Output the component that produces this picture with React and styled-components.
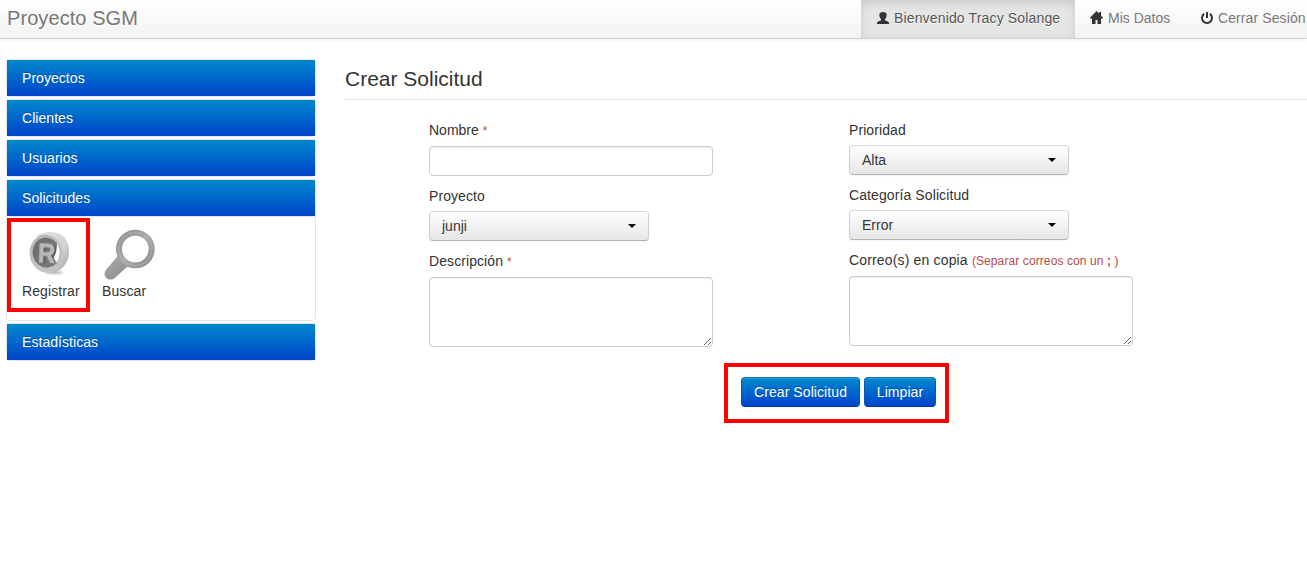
import React from "react";
import styled, { createGlobalStyle, css } from "styled-components";

const Global = createGlobalStyle`
  *, *::before, *::after { box-sizing: border-box; }
  html, body { margin: 0; background: #fff; overflow: hidden; }
  body {
    font-family: "Liberation Sans", Arial, Helvetica, sans-serif;
    font-size: 14px;
    line-height: 20px;
    color: #333;
  }
  button, input, textarea { font: inherit; margin: 0; }
`;

const Navbar = styled.header`
  display: flex;
  justify-content: space-between;
  height: 39px;
  padding-left: 7px;
  background: linear-gradient(to bottom, #fff, #f2f2f2);
  border-bottom: 1px solid #d4d4d4;
  box-shadow: 0 1px 4px rgba(0, 0, 0, 0.065);
  text-shadow: 0 1px 0 #fff;
`;

const Brand = styled.a`
  padding: 8px 0;
  font-size: 20px;
  letter-spacing: 0.08px;
  color: #777;
`;

const Nav = styled.nav`
  display: flex;
  margin-right: -14px;
`;

const NavLink = styled.a`
  display: flex;
  align-items: center;
  gap: 4px;
  width: ${({ $width }) => $width}px;
  height: 38px;
  padding: 0 0 2px 15px;
  color: #777;
  letter-spacing: ${({ $spacing = 0 }) => $spacing}px;
  white-space: nowrap;
  ${({ $active }) =>
    $active &&
    css`
      color: #555;
      background: #e5e5e5;
      box-shadow: inset 0 3px 8px rgba(0, 0, 0, 0.125);
    `}
`;

const NavIcon = styled.svg`
  width: 14px;
  height: 14px;
  flex: none;
  fill: #333;
`;

const Layout = styled.div`
  display: flex;
  gap: 29px;
  padding: 20px 0 0 6px;
`;

const Sidebar = styled.aside`
  display: flex;
  flex-direction: column;
  gap: 2px;
  width: 310px;
  flex: none;
`;

const Group = styled.section`
  border: 1px solid #e5e5e5;
  border-radius: 4px;
`;

const GroupHeading = styled.a`
  display: block;
  height: 36px;
  padding: 8px 15px;
  color: #fff;
  letter-spacing: 0.05px;
  background: linear-gradient(to bottom, #0088cc, #0044cc);
  text-shadow: 0 -1px 0 rgba(0, 0, 0, 0.25);
`;

const GroupBody = styled.div`
  display: flex;
  align-items: flex-start;
  height: 104px;
  padding-top: 1px;
  border-top: 1px solid #e5e5e5;
`;

const Shortcut = styled.a`
  display: flex;
  flex-direction: column;
  width: 83px;
  height: 94px;
  padding: 3px 0 0 ${({ $marked }) => ($marked ? 11 : 8)}px;
  border: 4px solid ${({ $marked }) => ($marked ? "#f00" : "transparent")};
  letter-spacing: 0.1px;
`;

const ShortcutIcon = styled.svg`
  width: 56px;
  height: 56px;
  flex: none;
`;

const Main = styled.main`
  flex: 1;
  min-width: 0;
`;

const Legend = styled.h1`
  height: 41px;
  margin: 0;
  font-size: 21px;
  line-height: 40px;
  font-weight: normal;
  border-bottom: 1px solid #e5e5e5;
`;

const Columns = styled.div`
  display: flex;
  gap: 136px;
  padding: 20px 0 0 84px;
`;

const Column = styled.div`
  display: flex;
  flex-direction: column;
  width: 284px;
`;

const Label = styled.label`
  height: 20px;
  margin-bottom: ${({ $gap = 5 }) => $gap}px;
  letter-spacing: ${({ $spacing = 0 }) => $spacing}px;
  white-space: nowrap;
`;

const Hint = styled.span`
  font-size: 12px;
  letter-spacing: 0.1px;
  color: #b94a48;
`;

const field = css`
  display: block;
  width: 284px;
  background: #fff;
  border: 1px solid #ccc;
  border-radius: 4px;
  box-shadow: inset 0 1px 1px rgba(0, 0, 0, 0.075);
  outline: 0;
`;

const Input = styled.input`
  ${field}
  height: 30px;
  padding: 4px 6px;
  margin-bottom: 10px;
`;

const Textarea = styled.textarea`
  ${field}
  height: 70px;
  padding: 4px 6px;
  overflow: auto;
  resize: both;
`;

const Select = styled.button`
  display: flex;
  align-items: center;
  justify-content: space-between;
  width: 220px;
  height: 30px;
  margin-bottom: 10px;
  padding: 0 12px;
  color: #333;
  text-align: left;
  text-shadow: 0 1px 1px rgba(255, 255, 255, 0.75);
  background: linear-gradient(to bottom, #fff, #e6e6e6);
  border: 1px solid;
  border-color: #d9d9d9 #d0d0d0 #b3b3b3;
  border-radius: 4px;
  box-shadow: inset 0 1px 0 rgba(255, 255, 255, 0.2), 0 1px 2px rgba(0, 0, 0, 0.05);
  &::after {
    content: "";
    border-top: 4px solid #000;
    border-left: 4px solid transparent;
    border-right: 4px solid transparent;
  }
`;

const Actions = styled.div`
  display: flex;
  gap: 4px;
  width: 225px;
  height: 60px;
  margin: 16px 0 0 379px;
  padding: 10px 9px 10px 13px;
  border: 4px solid #f00;
`;

const Primary = styled.button`
  width: ${({ $width }) => $width}px;
  height: 30px;
  padding: 0;
  color: #fff;
  letter-spacing: 0.08px;
  text-shadow: 0 -1px 0 rgba(0, 0, 0, 0.25);
  background: linear-gradient(to bottom, #0088cc, #0044cc);
  border: 1px solid;
  border-color: #0a6fbd #0a55bf #003ea8;
  border-radius: 4px;
  box-shadow: inset 0 1px 0 rgba(255, 255, 255, 0.2), 0 1px 2px rgba(0, 0, 0, 0.05);
`;

const UserIcon = () => (
  <NavIcon viewBox="0 0 14 14">
    <path d="M7 1C4.800 1 3.300 2 3.300 3.800c0 1.800.8 3.400 1.700 4.400v1C4.300 10 1 10.200 1 12v1h12v-1c0-1.800-3.300-2-4-2.800v-1C9.900 7.200 10.700 5.600 10.700 3.800 10.700 2 9.200 1 7 1z" />
  </NavIcon>
);

const HomeIcon = () => (
  <NavIcon viewBox="0 0 14 14">
    <path d="M6.500 0 0 6.800V7.500h2V13h3.500V9h2v4H11V7.500h2V6.800L11 4.700V1H9v1.600z" />
  </NavIcon>
);

const PowerIcon = () => (
  <NavIcon viewBox="0 0 14 14">
    <path d="M6 1h2v6H6z" />
    <path d="M4.200 2.900a5 5 0 1 0 5.600 0" fill="none" stroke="#333" strokeWidth="2" />
  </NavIcon>
);

const RegisterIcon = () => (
  <ShortcutIcon viewBox="66 22 168 168">
    <defs>
      <linearGradient id="rim" x1="0" y1="0" x2="1" y2="1">
        <stop offset="0" stopColor="#e4e4e4" />
        <stop offset=".6" stopColor="#d2d2d2" />
        <stop offset="1" stopColor="#a2a2a2" />
      </linearGradient>
      <linearGradient id="face" x1="0" y1="0" x2="0" y2="1">
        <stop offset="0" stopColor="#b6b6b6" />
        <stop offset="1" stopColor="#c6c6c6" />
      </linearGradient>
      <linearGradient id="well" x1="0" y1="0" x2="1" y2="1">
        <stop offset="0" stopColor="#6c6c6c" />
        <stop offset="1" stopColor="#7c7c7c" />
      </linearGradient>
      <filter id="soft" x="-20%" y="-80%" width="140%" height="260%">
        <feGaussianBlur stdDeviation="3" />
      </filter>
      <filter id="depth" x="-20%" y="-20%" width="150%" height="150%">
        <feDropShadow dx="5" dy="1" stdDeviation="0.5" floodColor="#505050" />
      </filter>
    </defs>
    <ellipse cx="162" cy="164" rx="27" ry="4" fill="#a0a0a0" filter="url(#soft)" />
    <path d="M108 56C124 42 156 38 181 50c20 11 28 34 26 58-3 25-14 40-29 49-12 8-24 10-38 8z" fill="url(#rim)" />
    <ellipse cx="138" cy="108" rx="49" ry="57" fill="url(#face)" transform="rotate(-8 138 108)" />
    <ellipse cx="139" cy="105" rx="41" ry="45" fill="url(#well)" transform="rotate(-8 139 105)" />
    <path d="M171 76c12 17 12 45-4 62l-8-12c8-16 12-32 12-50z" fill="#fff" />
    <text
      x="114"
      y="135"
      fill="#b8b8b8"
      stroke="#b8b8b8"
      strokeWidth="2"
      fontFamily="Liberation Sans, Arial, sans-serif"
      fontWeight="bold"
      fontSize="84"
      filter="url(#depth)"
      textLength="52"
      lengthAdjust="spacingAndGlyphs"
      transform="rotate(2 137 108)"
    >
      R
    </text>
  </ShortcutIcon>
);

const SearchIcon = () => (
  <ShortcutIcon viewBox="306 30 168 168">
    <defs>
      <linearGradient id="glass" x1="0" y1="0" x2="1" y2="1">
        <stop offset="0" stopColor="#8c8c8c" />
        <stop offset=".5" stopColor="#acacac" />
        <stop offset="1" stopColor="#858585" />
      </linearGradient>
      <linearGradient id="grip" x1="0" y1="0" x2="1" y2="1">
        <stop offset="0" stopColor="#b0b0b0" />
        <stop offset="1" stopColor="#848484" />
      </linearGradient>
    </defs>
    <path d="M358 118 318 164c-6 8-6 18 1 25 8 7 19 6 26-1l46-42z" fill="url(#grip)" />
    <circle cx="406" cy="102" r="49" fill="#fff" stroke="url(#glass)" strokeWidth="18" />
    <circle cx="406" cy="102" r="50" fill="none" stroke="#b2b2b2" strokeOpacity=".5" strokeWidth="7" />
  </ShortcutIcon>
);

const MenuGroup = ({ title, children }) => (
  <Group>
    <GroupHeading>{title}</GroupHeading>
    {children && <GroupBody>{children}</GroupBody>}
  </Group>
);

export default function App() {
  return (
    <>
      <Global />
      <Navbar>
        <Brand>Proyecto SGM</Brand>
        <Nav>
          <NavLink $active $width={214} $spacing={0.15}><UserIcon />Bienvenido Tracy Solange</NavLink>
          <NavLink $width={110}><HomeIcon />Mis Datos</NavLink>
          <NavLink $width={136} $spacing={0.1}><PowerIcon />Cerrar Sesión</NavLink>
        </Nav>
      </Navbar>
      <Layout>
        <Sidebar>
          <MenuGroup title="Proyectos" />
          <MenuGroup title="Clientes" />
          <MenuGroup title="Usuarios" />
          <MenuGroup title="Solicitudes">
            <Shortcut $marked><RegisterIcon />Registrar</Shortcut>
            <Shortcut><SearchIcon />Buscar</Shortcut>
          </MenuGroup>
          <MenuGroup title="Estadísticas" />
        </Sidebar>
        <Main>
          <Legend>Crear Solicitud</Legend>
          <Columns>
            <Column>
              <Label $gap={6}>Nombre <Hint>*</Hint></Label>
              <Input />
              <Label $spacing={0.08}>Proyecto</Label>
              <Select>junji</Select>
              <Label $gap={6} $spacing={0.08}>Descripción <Hint>*</Hint></Label>
              <Textarea />
            </Column>
            <Column>
              <Label $spacing={0.08}>Prioridad</Label>
              <Select>Alta</Select>
              <Label $spacing={0.1}>Categoría Solicitud</Label>
              <Select>Error</Select>
              <Label $gap={6} $spacing={0.16}>Correo(s) en copia <Hint>(Separar correos con un <b>;</b> )</Hint></Label>
              <Textarea />
            </Column>
          </Columns>
          <Actions>
            <Primary $width={119}>Crear Solicitud</Primary>
            <Primary $width={72}>Limpiar</Primary>
          </Actions>
        </Main>
      </Layout>
    </>
  );
}
